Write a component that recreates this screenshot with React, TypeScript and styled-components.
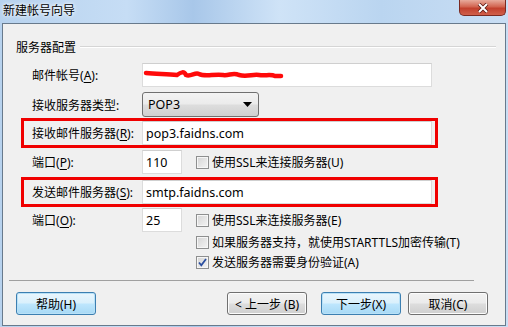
import React from 'react'
import styled, { createGlobalStyle } from 'styled-components'

const GlobalStyle = createGlobalStyle`
  html, body {
    margin: 0;
    padding: 0;
  }
  body {
    font-family: "Noto Sans", "Noto Sans CJK SC", sans-serif;
    font-size: 12px;
    color: #000;
  }
`

type Check = { text: string; checked?: boolean }

function CheckBox({ text, checked }: Check) {
  return (
    <CheckLabel>
      <Box>
        {checked && (
          <svg width="11" height="11" viewBox="0 0 11 11">
            <path d="M2 5.5 L4.3 8.3 L9 2" fill="none" stroke="#2b4fa0" strokeWidth="1.8" />
          </svg>
        )}
      </Box>
      <span>{text}</span>
    </CheckLabel>
  )
}

function Label({ text, keyChar }: { text: string; keyChar: string }) {
  return (
    <FieldLabel>
      {text}(<u>{keyChar}</u>):
    </FieldLabel>
  )
}

function App() {
  return (
    <>
      <GlobalStyle />
      <Window>
        <TitleBar>
          <Title>新建帐号向导</Title>
          <CloseButton>
            <svg width="14" height="10" viewBox="0 0 14 10">
              <path d="M3 1 L11 9 M11 1 L3 9" stroke="#5a1a14" strokeWidth="3.6" />
              <path d="M3 1 L11 9 M11 1 L3 9" stroke="#fff" strokeWidth="2" />
            </svg>
          </CloseButton>
        </TitleBar>
        <Client>
          <GroupHeader>
            <span>服务器配置</span>
            <GroupLine />
          </GroupHeader>
          <Form>
            <Row top={8}>
              <Label text="邮件帐号" keyChar="A" />
              <InputWrap>
                <TextInput width={290} />
                <Scribble width="142" height="14" viewBox="0 0 142 14">
                  <path
                    d="M3 5 C14 6 24 6 34 7 C38 4 41 3 43 7 C48 9 52 4 56 6 C62 9 70 6 80 7 C86 8 90 4 96 7 C104 9 110 6 116 7 C122 8 128 6 132 8 L138 8"
                    fill="none"
                    stroke="#ff0a0a"
                    strokeWidth="4.5"
                    strokeLinecap="round"
                  />
                </Scribble>
              </InputWrap>
            </Row>
            <Row top={5}>
              <FieldLabel>接收服务器类型:</FieldLabel>
              <Select>
                <span>POP3</span>
                <svg width="9" height="5" viewBox="0 0 9 5">
                  <path d="M0 0 H9 L4.5 5 Z" fill="#000" />
                </svg>
              </Select>
            </Row>
            <Row top={1} highlight>
              <Label text="接收邮件服务器" keyChar="R" />
              <TextInput width={290}>pop3.faidns.com</TextInput>
            </Row>
            <Row top={2}>
              <Label text="端口" keyChar="P" />
              <PortLine>
                <TextInput width={40}>110</TextInput>
                <CheckBox text="使用SSL来连接服务器(U)" />
              </PortLine>
            </Row>
            <Row top={3} highlight>
              <Label text="发送邮件服务器" keyChar="S" />
              <TextInput width={290}>smtp.faidns.com</TextInput>
            </Row>
            <Row top={1}>
              <Label text="端口" keyChar="O" />
              <PortLine>
                <TextInput width={40}>25</TextInput>
                <CheckBox text="使用SSL来连接服务器(E)" />
              </PortLine>
            </Row>
            <CheckRow>
              <CheckBox text="如果服务器支持，就使用STARTTLS加密传输(T)" />
            </CheckRow>
            <CheckRow>
              <CheckBox text="发送服务器需要身份验证(A)" checked />
            </CheckRow>
          </Form>
          <Separator />
          <ButtonBar>
            <Button primary>帮助(H)</Button>
            <Spacer />
            <Button>&lt; 上一步 (B)</Button>
            <Button primary gap={14}>下一步(X)</Button>
            <Button gap={7}>取消(C)</Button>
          </ButtonBar>
        </Client>
      </Window>
    </>
  )
}

export default App

const Window = styled.div`
  width: 508px;
  height: 327px;
  display: flex;
  flex-direction: column;
  box-sizing: border-box;
  background: linear-gradient(
    90deg,
    #b7d2ee 0%,
    #c6ddf5 25%,
    #a8c7e9 38%,
    #cfe3f7 55%,
    #bad5f0 75%,
    #c9def4 100%
  );
`

const TitleBar = styled.div`
  height: 23px;
  display: flex;
  align-items: flex-start;
  justify-content: space-between;
  padding-left: 3px;
`

const Title = styled.span`
  margin-top: 3px;
  line-height: 15px;
  text-shadow: 0 0 5px #fff, 0 0 3px #fff;
`

const CloseButton = styled.div`
  width: 47px;
  height: 16px;
  margin-right: 2px;
  box-sizing: border-box;
  border: 1px solid #7b2a21;
  border-top: none;
  border-radius: 0 0 5px 5px;
  background: linear-gradient(#e8ab9c, #d26450 45%, #c2402d 55%, #d0604b);
  display: flex;
  align-items: center;
  justify-content: center;
`

const Client = styled.div`
  flex: 1;
  margin: 0 2px 1px 2px;
  border: 1px solid #687a8c;
  background: #f0f0f0;
  display: flex;
  flex-direction: column;
`

const GroupHeader = styled.div`
  margin-top: 15px;
  height: 16px;
  padding-left: 13px;
  display: flex;
  align-items: center;
  gap: 4px;
`

const GroupLine = styled.div`
  flex: 1;
  margin-right: 9px;
  border-top: 1px solid #d5d5d5;
  border-bottom: 1px solid #ffffff;
`

const Form = styled.div`
  padding-left: 18px;
  display: flex;
  flex-direction: column;
`

const Row = styled.div<{ top: number; highlight?: boolean }>`
  width: 417px;
  box-sizing: border-box;
  margin-top: ${(p) => p.top}px;
  display: grid;
  grid-template-columns: 110px auto;
  align-items: center;
  padding-left: 8px;
  border-style: solid;
  border-color: ${(p) => (p.highlight ? '#f00000' : 'transparent')};
  border-width: ${(p) => (p.highlight ? '3px' : '0 3px')};
`

const FieldLabel = styled.span`
  white-space: nowrap;

  u {
    text-decoration-thickness: 1px;
    text-underline-offset: 2px;
  }
`

const InputWrap = styled.div`
  position: relative;
`

const TextInput = styled.div<{ width: number }>`
  width: ${(p) => p.width}px;
  height: 24px;
  box-sizing: border-box;
  background: #fff;
  border: 1px solid #dcdcdc;
  border-top-color: #cfcfcf;
  padding-left: 3px;
  display: flex;
  align-items: center;
  font-size: 12.5px;
`

const Scribble = styled.svg`
  position: absolute;
  left: 1px;
  top: 5px;
`

const Select = styled.div`
  width: 117px;
  height: 25px;
  box-sizing: border-box;
  border: 1px solid #707070;
  border-radius: 3px;
  background: linear-gradient(#f3f3f3, #ebebeb 48%, #dddddd 52%, #d0d0d0);
  display: flex;
  align-items: center;
  justify-content: space-between;
  padding: 0 6px 0 5px;
  font-size: 12.5px;
`

const PortLine = styled.div`
  display: flex;
  align-items: center;
  gap: 14px;
`

const CheckRow = styled.div`
  height: 20px;
  padding-left: 175px;
  display: flex;
  align-items: center;
`

const CheckLabel = styled.label`
  display: flex;
  align-items: center;
  gap: 3px;
  white-space: nowrap;
`

const Box = styled.span`
  width: 13px;
  height: 13px;
  box-sizing: border-box;
  border: 1px solid #8e8f8f;
  background: linear-gradient(135deg, #d4d4d4, #f4f4f4);
  box-shadow: inset 0 0 0 1px #f6f6f6;
  display: flex;
  align-items: center;
  justify-content: center;
`

const Separator = styled.div`
  margin: 8px 31px 0 6px;
  border-top: 1px solid #a0a0a0;
`

const ButtonBar = styled.div`
  margin-top: 11px;
  padding: 0 17px 0 13px;
  display: flex;
  align-items: center;
`

const Spacer = styled.div`
  flex: 1;
`

const Button = styled.div<{ primary?: boolean; gap?: number }>`
  width: 80px;
  height: 23px;
  box-sizing: border-box;
  margin-left: ${(p) => p.gap || 0}px;
  border: 1px solid ${(p) => (p.primary ? '#3c7fb1' : '#707070')};
  border-radius: 3px;
  background: ${(p) =>
    p.primary
      ? 'linear-gradient(#eaf6fd, #d9f0fc 48%, #bee6fd 52%, #a7d9f5)'
      : 'linear-gradient(#f2f2f2, #ebebeb 48%, #dddddd 52%, #cfcfcf)'};
  box-shadow: inset 0 0 0 1px ${(p) => (p.primary ? '#b9e1f7' : '#fcfcfc')};
  display: flex;
  align-items: center;
  justify-content: center;
  white-space: nowrap;
`
